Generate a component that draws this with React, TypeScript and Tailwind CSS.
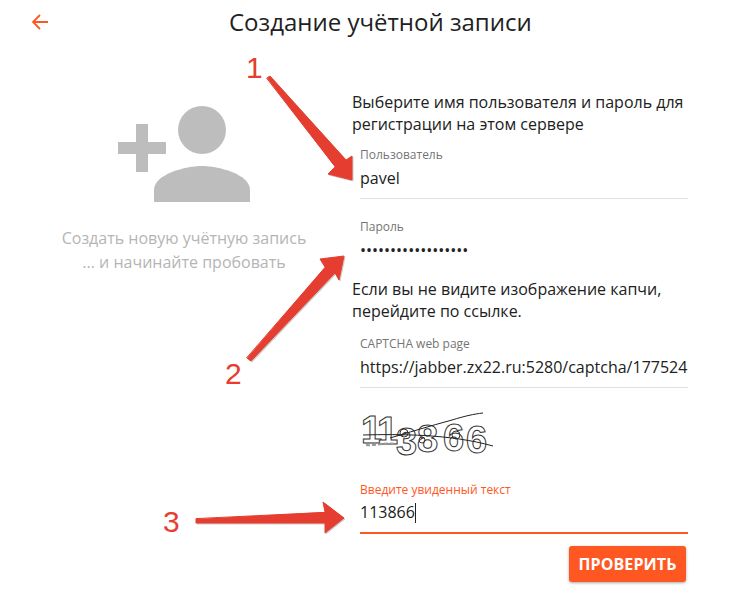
import React from 'react';

const Field: React.FC<{ label: string; value: string; active?: boolean; dots?: boolean }> = ({ label, value, active, dots }) => {
  let box = 'ml-2 w-[328px] h-[54px] pt-[2px] border-b border-[#e0e0e0]';
  if (active) box = 'ml-2 w-[328px] h-[54px] pt-[2px] border-b-2 border-[#ff5722]';
  if (dots) box = 'ml-2 w-[328px] h-[54px] pt-[2px]';

  return (
    <div className={box}>
      <div className={active ? 'text-[12px] leading-[16px] text-[#ff5722]' : 'text-[12px] leading-[16px] text-[#757575]'}>{label}</div>
      <div className={active ? 'mt-[2px] text-[16px] leading-[24px] text-[#212121] whitespace-nowrap' : 'mt-[3px] text-[16px] leading-[24px] text-[#212121] whitespace-nowrap'}>
        {value}
        {active && <span className="inline-block w-px h-[20px] bg-[#212121] align-[-5px]"></span>}
      </div>
    </div>
  );
};

const AddUserIcon = () => (
  <svg width="132" height="96" viewBox="0 0 132 96" fill="#bdbdbd">
    <circle cx="84" cy="24" r="24" />
    <path d="M36 96 V84 C36 68 68 60 84 60 C100 60 132 68 132 84 V96 Z" />
    <path d="M18 18 H30 V36 H48 V48 H30 V66 H18 V48 H0 V36 H18 Z" />
  </svg>
);

const Captcha = () => (
  <svg width="135" height="52" viewBox="0 0 135 52" className="block overflow-visible">
    <text
      x="1 17 36 57 83 106"
      y="35 36 47 44 43 45"
      fontFamily="'Liberation Sans', sans-serif"
      fontWeight="700"
      fontSize="38"
      fill="#ffffff"
      stroke="#333333"
      strokeWidth="1"
    >
      113866
    </text>
    <path d="M30 30 C50 24 70 18 92 12 C105 8 114 6 123 5" fill="none" stroke="#222222" strokeWidth="1" />
    <path d="M3 27 C40 26 90 26 133 38" fill="none" stroke="#222222" strokeWidth="1" />
    <path d="M6 37 C16 38 26 34 36 36" fill="none" stroke="#999999" strokeWidth="2" strokeDasharray="4 2" />
    <circle cx="44" cy="25" r="4" fill="none" stroke="#333333" />
    <circle cx="62" cy="32" r="3" fill="none" stroke="#333333" />
    <circle cx="96" cy="27" r="4" fill="none" stroke="#333333" />
  </svg>
);

const App: React.FC = () => {
  return (
    <div className="relative w-[733px] h-[602px] bg-white overflow-hidden font-['Open_Sans',sans-serif] text-[#212121]">
      <header className="h-[44px] flex items-center relative">
        <svg className="ml-[32px]" width="16" height="16" viewBox="0 0 16 16" fill="none" stroke="#ff5722" strokeWidth="1.8">
          <path d="M16 8 H1 M8 1 L1 8 L8 15" />
        </svg>
        <h1 className="ml-[181px] text-[24px] leading-[32px] font-normal whitespace-nowrap">Создание учётной записи</h1>
      </header>

      <div className="flex">
        <div className="w-[352px] shrink-0 flex flex-col items-center pl-[16px] pr-0 pt-[62px]">
          <AddUserIcon />
          <div className="mt-[24px] text-[16px] leading-[24px] text-[#b5b5b5] text-center">
            <div>Создать новую учётную запись</div>
            <div>... и начинайте пробовать</div>
          </div>
        </div>

        <div className="w-[352px] pt-[47px]">
          <p className="text-[16px] leading-[22px] whitespace-nowrap">
            Выберите имя пользователя и пароль для
            <br />
            регистрации на этом сервере
          </p>
          <div className="mt-[10px]">
            <Field label="Пользователь" value="pavel" />
          </div>
          <div className="mt-[18px]">
            <Field label="Пароль" value="••••••••••••••••••" dots />
          </div>
          <p className="mt-[7px] text-[16px] leading-[22px] whitespace-nowrap">
            Если вы не видите изображение капчи,
            <br />
            перейдите по ссылке.
          </p>
          <div className="mt-[12px]">
            <Field label="CAPTCHA web page" value="https://jabber.zx22.ru:5280/captcha/177524" />
          </div>
          <div className="ml-[8px] mt-[20px] h-[52px]">
            <Captcha />
          </div>
          <div className="mt-[20px]">
            <Field label="Введите увиденный текст" value="113866" active />
          </div>
          <div className="ml-[217px] mt-[12px]">
            <button className="w-[117px] h-[36px] rounded-[3px] bg-[#ff5722] text-white text-[16px] font-bold tracking-[0.1px] shadow-[0_1px_3px_rgba(0,0,0,0.35)]">
              ПРОВЕРИТЬ
            </button>
          </div>
        </div>
      </div>

      {/* Пометки поверх скриншота */}
      <svg className="absolute inset-0 pointer-events-none" width="733" height="602" viewBox="0 0 733 602" fill="#e53e30">
        <g stroke="#e53e30" strokeLinejoin="round" strokeLinecap="round" strokeWidth="1" className="drop-shadow-[1px_1px_0_#cccccc]">
          <path d="M267 78 L270 76 L346 160 L352 156 L352 180 L328 174 L335 167 Z" />
          <path d="M247 358 L251 361 L335 273 L339 280 L344 256 L320 259 L325 267 Z" />
          <path d="M196 519 L196 523 L325 523 L325 533 L344 518 L323 502 L325 512 Z" />
        </g>
        <g fontFamily="'Liberation Sans', sans-serif" fontSize="30" stroke="none">
          <text x="246" y="78">1</text>
          <text x="225" y="384">2</text>
          <text x="163" y="532">3</text>
        </g>
      </svg>
    </div>
  );
};

export default App;
